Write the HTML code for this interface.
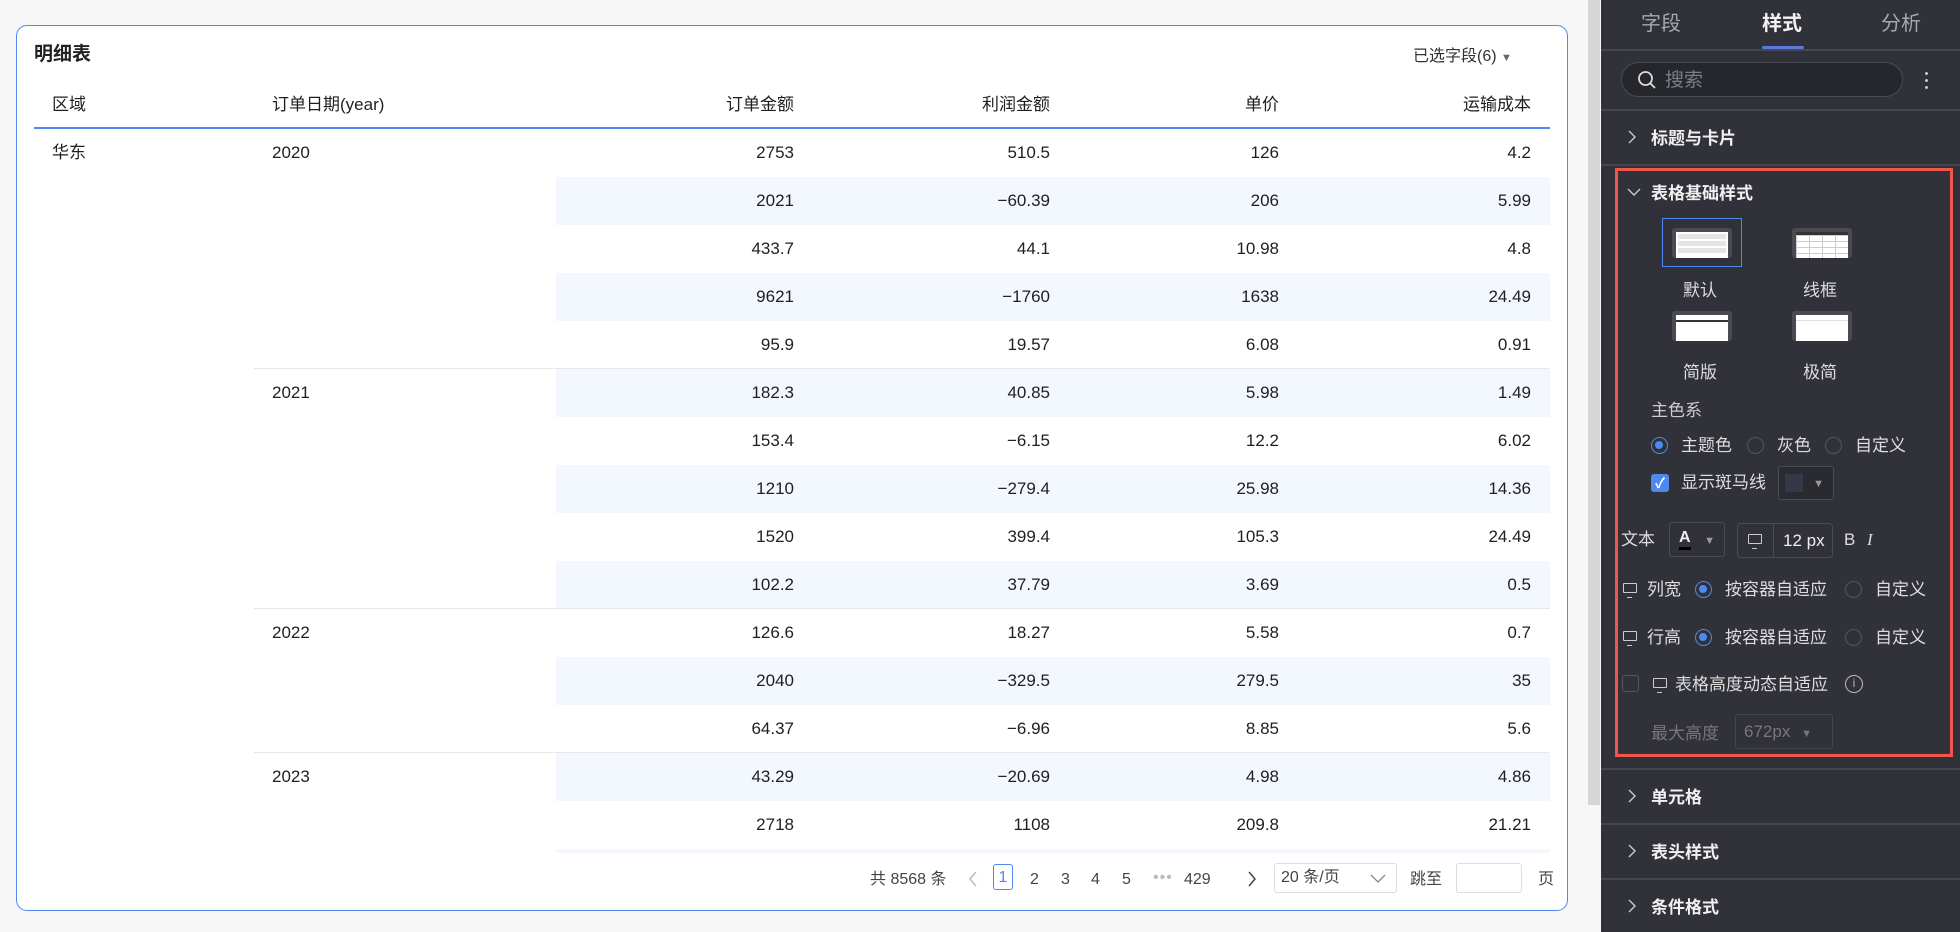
<!DOCTYPE html>
<html><head><meta charset="utf-8"><style>
*{margin:0;padding:0;box-sizing:border-box}
body{width:1960px;height:932px;background:#f7f7f7;font-family:"Liberation Sans","Noto Sans CJK SC",sans-serif;position:relative;overflow:hidden;color:#1f1f1f;line-height:20px}
.a{position:absolute;white-space:nowrap}
.card{position:absolute;left:16px;top:25px;width:1552px;height:886px;background:#fff;border:1.5px solid #4d8af0;border-radius:11px}
.sb{position:absolute;left:1588px;top:0;width:12px;height:805px;background:#d6d6d6}
.tw{position:absolute;left:34px;top:128px;width:1516px;height:725px;overflow:hidden}
.hl{position:absolute;left:34px;top:127px;width:1516px;height:2px;background:#4d8af0}
.r{position:absolute;left:0;width:1516px;height:48px;font-size:17px;line-height:48px}
.z{background:#f3f7fe;left:522px;width:994px}
.r span{position:absolute;top:0}
.c3{right:756px}.c4{right:500px}.c5{right:271px}.c6{right:19px}
.sep{position:absolute;height:1px;background:#e8e8e8;left:220px;width:1296px}
.panel{position:absolute;left:1601px;top:0;width:359px;height:932px;background:#303139;color:#e8e8ea}
.dv{position:absolute;left:0;width:359px;height:1.5px;background:#45464e}
.st{font-size:17px;font-weight:bold;color:#f0f0f0}
.rad{position:absolute;width:17px;height:17px;border-radius:50%;border:1.5px solid #555760}
.rad.on{border:1.5px solid #4d8af0}
.rad.on::after{content:"";position:absolute;left:3px;top:3px;width:8px;height:8px;border-radius:50%;background:#4d8af0}
.mon{position:absolute;width:14px;height:10px;border:1.5px solid #ccc;border-radius:1px}
.mon::after{content:"";position:absolute;left:3px;top:10px;width:5px;height:3px;border-bottom:1.5px solid #ccc}
.pg{font-size:16px;color:#444}
.chev{position:absolute;left:27px}
</style></head><body>
<div class="sb"></div>
<div class="card"></div>
<div class="a" style="left:34px;top:45px;font-size:19px;font-weight:bold;color:#222">明细表</div>
<div class="a" style="left:1413px;top:47px;font-size:16px;color:#333">已选字段(6) <span style="font-size:11px;color:#666">▼</span></div>
<div class="a" style="left:52px;top:95px;font-size:17px">区域</div>
<div class="a" style="left:272px;top:95px;font-size:17px">订单日期(year)</div>
<div class="a" style="left:726px;top:95px;font-size:17px">订单金额</div>
<div class="a" style="left:982px;top:95px;font-size:17px">利润金额</div>
<div class="a" style="left:1245px;top:95px;font-size:17px">单价</div>
<div class="a" style="left:1463px;top:95px;font-size:17px">运输成本</div>
<div class="hl"></div>
<div class="tw">
<div class="r z" style="top:49px"></div><div class="r z" style="top:145px"></div><div class="r z" style="top:241px"></div><div class="r z" style="top:337px"></div><div class="r z" style="top:433px"></div><div class="r z" style="top:529px"></div><div class="r z" style="top:625px"></div><div class="r z" style="top:721px"></div>
<div class="sep" style="top:240px"></div><div class="sep" style="top:480px"></div><div class="sep" style="top:624px"></div>
<div class="r" style="top:1px"><span style="left:18px">华东</span><span style="left:238px">2020</span><span class="c3">2753</span><span class="c4">510.5</span><span class="c5">126</span><span class="c6">4.2</span></div>
<div class="r" style="top:49px"><span class="c3">2021</span><span class="c4">−60.39</span><span class="c5">206</span><span class="c6">5.99</span></div>
<div class="r" style="top:97px"><span class="c3">433.7</span><span class="c4">44.1</span><span class="c5">10.98</span><span class="c6">4.8</span></div>
<div class="r" style="top:145px"><span class="c3">9621</span><span class="c4">−1760</span><span class="c5">1638</span><span class="c6">24.49</span></div>
<div class="r" style="top:193px"><span class="c3">95.9</span><span class="c4">19.57</span><span class="c5">6.08</span><span class="c6">0.91</span></div>
<div class="r" style="top:241px"><span style="left:238px">2021</span><span class="c3">182.3</span><span class="c4">40.85</span><span class="c5">5.98</span><span class="c6">1.49</span></div>
<div class="r" style="top:289px"><span class="c3">153.4</span><span class="c4">−6.15</span><span class="c5">12.2</span><span class="c6">6.02</span></div>
<div class="r" style="top:337px"><span class="c3">1210</span><span class="c4">−279.4</span><span class="c5">25.98</span><span class="c6">14.36</span></div>
<div class="r" style="top:385px"><span class="c3">1520</span><span class="c4">399.4</span><span class="c5">105.3</span><span class="c6">24.49</span></div>
<div class="r" style="top:433px"><span class="c3">102.2</span><span class="c4">37.79</span><span class="c5">3.69</span><span class="c6">0.5</span></div>
<div class="r" style="top:481px"><span style="left:238px">2022</span><span class="c3">126.6</span><span class="c4">18.27</span><span class="c5">5.58</span><span class="c6">0.7</span></div>
<div class="r" style="top:529px"><span class="c3">2040</span><span class="c4">−329.5</span><span class="c5">279.5</span><span class="c6">35</span></div>
<div class="r" style="top:577px"><span class="c3">64.37</span><span class="c4">−6.96</span><span class="c5">8.85</span><span class="c6">5.6</span></div>
<div class="r" style="top:625px"><span style="left:238px">2023</span><span class="c3">43.29</span><span class="c4">−20.69</span><span class="c5">4.98</span><span class="c6">4.86</span></div>
<div class="r" style="top:673px"><span class="c3">2718</span><span class="c4">1108</span><span class="c5">209.8</span><span class="c6">21.21</span></div>
</div>
<!-- pagination -->
<div class="a pg" style="left:870px;top:870px">共 8568 条</div>
<svg class="a" style="left:968px;top:871px" width="10" height="16"><path d="M8 1L2 8l6 7" fill="none" stroke="#bbb" stroke-width="1.5"/></svg>
<div class="a" style="left:993px;top:864px;width:20px;height:26px;border:1.5px solid #4d8af0;border-radius:3px;color:#4d8af0;font-size:16px;text-align:center;line-height:25px">1</div>
<div class="a pg" style="left:1030px;top:870px">2</div>
<div class="a pg" style="left:1061px;top:870px">3</div>
<div class="a pg" style="left:1091px;top:870px">4</div>
<div class="a pg" style="left:1122px;top:870px">5</div>
<div class="a pg" style="left:1153px;top:868px;color:#bbb;letter-spacing:1px">•••</div>
<div class="a pg" style="left:1184px;top:870px">429</div>
<svg class="a" style="left:1247px;top:871px" width="10" height="16"><path d="M2 1l6 7-6 7" fill="none" stroke="#444" stroke-width="1.5"/></svg>
<div class="a" style="left:1274px;top:863px;width:123px;height:30px;border:1px solid #ddd;border-radius:3px;font-size:16px;color:#444;padding-left:6px;line-height:28px">20 条/页 <svg style="position:absolute;right:10px;top:10px" width="16" height="9"><path d="M1 1l7 7 7-7" fill="none" stroke="#888" stroke-width="1.3"/></svg></div>
<div class="a pg" style="left:1410px;top:870px">跳至</div>
<div class="a" style="left:1456px;top:863px;width:66px;height:30px;border:1px solid #ddd;border-radius:3px"></div>
<div class="a pg" style="left:1538px;top:870px">页</div>

<!-- panel -->
<div class="panel">
<div class="a" style="left:40px;top:14px;font-size:20px;color:#a8a9ae">字段</div>
<div class="a" style="left:161px;top:14px;font-size:20px;font-weight:bold;color:#f2f2f2">样式</div>
<div class="a" style="left:280px;top:14px;font-size:20px;color:#a8a9ae">分析</div>
<div class="a" style="left:161px;top:46px;width:42px;height:3px;background:#5b7ae0;border-radius:2px"></div>
<div class="dv" style="top:49px"></div>
<div class="a" style="left:20px;top:62px;width:282px;height:35px;border:1.5px solid #4a4b53;border-radius:18px;background:#26272d"></div>
<svg class="a" style="left:36px;top:70px" width="20" height="20" viewBox="0 0 20 20"><circle cx="8.5" cy="8.5" r="6.5" fill="none" stroke="#ddd" stroke-width="1.8"/><path d="M13 13l5 5" stroke="#ddd" stroke-width="1.8"/></svg>
<div class="a" style="left:64px;top:71px;font-size:19px;color:#7d7e84">搜索</div>
<div class="a" style="left:324px;top:70px;width:3px;height:20px;background:radial-gradient(circle,#ccc 1.3px,transparent 1.6px) 0 0/3px 7px"></div>
<div class="dv" style="top:109px"></div>
<svg class="chev" style="top:130px" width="8" height="14"><path d="M1 1l6 6-6 6" fill="none" stroke="#ccc" stroke-width="1.4"/></svg>
<div class="a st" style="left:50px;top:129px">标题与卡片</div>
<div class="dv" style="top:164px"></div>
<div class="a" style="left:14px;top:168px;width:338px;height:589px;border:3px solid #f0564a"></div>
<svg class="a" style="left:26px;top:188px" width="14" height="9"><path d="M1 1l6 6 6-6" fill="none" stroke="#ccc" stroke-width="1.4"/></svg>
<div class="a st" style="left:50px;top:184px">表格基础样式</div>
<div class="a" style="left:61px;top:218px;width:80px;height:49px;border:1.5px solid #4d8af0"></div>
<div class="a" style="left:71px;top:228px;width:60px;height:30px;background:#4a4b52;border-radius:3px;padding:4px 4px 0"><div style="background:#fff;height:26px;padding:2px"><div style="background:#e4e4e4;height:5px;margin-bottom:2px"></div><div style="background:#e4e4e4;height:5px;margin-bottom:2px"></div><div style="background:#e4e4e4;height:5px"></div></div></div>
<div class="a" style="left:191px;top:228px;width:60px;height:30px;background:#4a4b52;border-radius:3px;padding:4px 4px 0"><div style="background:#fff;height:26px;border-top:3px solid #333;background-image:linear-gradient(#ccc 1px,transparent 1px),linear-gradient(90deg,#ccc 1px,transparent 1px);background-size:13px 6px"></div></div>
<div class="a" style="left:82px;top:281px;font-size:17px;color:#ddd">默认</div>
<div class="a" style="left:202px;top:281px;font-size:17px;color:#ddd">线框</div>
<div class="a" style="left:71px;top:311px;width:60px;height:30px;background:#4a4b52;border-radius:3px;padding:4px 4px 0"><div style="background:#fff;height:26px;border-top:5px solid #fff;box-shadow:inset 0 2px 0 #333"></div></div>
<div class="a" style="left:191px;top:311px;width:60px;height:30px;background:#4a4b52;border-radius:3px;padding:4px 4px 0"><div style="background:#fff;height:26px;box-shadow:inset 0 -20px 0 #fff,inset 0 -21px 0 #e0e0e0"></div></div>
<div class="a" style="left:82px;top:363px;font-size:17px;color:#ddd">简版</div>
<div class="a" style="left:202px;top:363px;font-size:17px;color:#ddd">极简</div>
<div class="a" style="left:50px;top:401px;font-size:17px;color:#ccc">主色系</div>
<div class="rad on" style="left:50px;top:437px"></div>
<div class="a" style="left:80px;top:436px;font-size:17px;color:#ddd">主题色</div>
<div class="rad" style="left:146px;top:437px"></div>
<div class="a" style="left:176px;top:436px;font-size:17px;color:#ddd">灰色</div>
<div class="rad" style="left:224px;top:437px"></div>
<div class="a" style="left:254px;top:436px;font-size:17px;color:#ddd">自定义</div>
<div class="a" style="left:50px;top:474px;width:18px;height:18px;background:#4d8af0;border-radius:3px;color:#fff;font-size:14px;text-align:center;line-height:18px;font-weight:bold">✓</div>
<div class="a" style="left:80px;top:473px;font-size:17px;color:#ddd">显示斑马线</div>
<div class="a" style="left:177px;top:466px;width:56px;height:34px;border:1px solid #4a4b53;border-radius:3px;background:#2a2b31"><div style="position:absolute;left:6px;top:7px;width:18px;height:18px;background:#353848"></div><span style="position:absolute;right:9px;top:7px;font-size:11px;color:#999">▼</span></div>
<div class="a" style="left:20px;top:530px;font-size:17px;color:#ddd">文本</div>
<div class="a" style="left:68px;top:522px;width:56px;height:35px;border:1px solid #4a4b53;border-radius:3px"><span style="position:absolute;left:9px;top:6px;font-size:16px;font-weight:bold;color:#eee;border-bottom:3px solid #000;line-height:18px">A</span><span style="position:absolute;right:9px;top:8px;font-size:11px;color:#999">▼</span></div>
<div class="a" style="left:136px;top:523px;width:96px;height:35px;border:1px solid #4a4b53;border-radius:4px"><div style="position:absolute;left:35px;top:0;width:1px;height:33px;background:#4a4b53"></div><span style="position:absolute;left:45px;top:7px;font-size:17px;color:#eee">12 px</span></div>
<div class="mon" style="left:147px;top:534px"></div>
<div class="a" style="left:243px;top:530px;font-size:17px;color:#ddd">B</div>
<div class="a" style="left:266px;top:530px;font-size:17px;color:#ddd;font-style:italic;font-family:'Liberation Serif',serif">I</div>
<div class="mon" style="left:22px;top:583px"></div>
<div class="a" style="left:46px;top:580px;font-size:17px;color:#ddd">列宽</div>
<div class="rad on" style="left:94px;top:581px"></div>
<div class="a" style="left:124px;top:580px;font-size:17px;color:#ddd">按容器自适应</div>
<div class="rad" style="left:244px;top:581px"></div>
<div class="a" style="left:274px;top:580px;font-size:17px;color:#ddd">自定义</div>
<div class="mon" style="left:22px;top:631px"></div>
<div class="a" style="left:46px;top:628px;font-size:17px;color:#ddd">行高</div>
<div class="rad on" style="left:94px;top:629px"></div>
<div class="a" style="left:124px;top:628px;font-size:17px;color:#ddd">按容器自适应</div>
<div class="rad" style="left:244px;top:629px"></div>
<div class="a" style="left:274px;top:628px;font-size:17px;color:#ddd">自定义</div>
<div class="a" style="left:21px;top:675px;width:17px;height:17px;border:1.5px solid #555760;border-radius:3px"></div>
<div class="mon" style="left:52px;top:678px"></div>
<div class="a" style="left:74px;top:675px;font-size:17px;color:#ddd">表格高度动态自适应</div>
<div class="a" style="left:244px;top:675px;width:18px;height:18px;border:1.5px solid #bbb;border-radius:50%;font-size:12px;color:#bbb;text-align:center;line-height:15px">i</div>
<div class="a" style="left:50px;top:724px;font-size:17px;color:#777">最大高度</div>
<div class="a" style="left:134px;top:714px;width:98px;height:35px;border:1px solid #44454c;border-radius:3px;font-size:17px;color:#777;padding:7px 0 0 8px">672px<span style="position:absolute;right:20px;top:9px;font-size:11px">▼</span></div>
<div class="dv" style="top:768px"></div>
<svg class="chev" style="top:789px" width="8" height="14"><path d="M1 1l6 6-6 6" fill="none" stroke="#ccc" stroke-width="1.4"/></svg>
<div class="a st" style="left:50px;top:788px">单元格</div>
<div class="dv" style="top:823px"></div>
<svg class="chev" style="top:844px" width="8" height="14"><path d="M1 1l6 6-6 6" fill="none" stroke="#ccc" stroke-width="1.4"/></svg>
<div class="a st" style="left:50px;top:843px">表头样式</div>
<div class="dv" style="top:878px"></div>
<svg class="chev" style="top:899px" width="8" height="14"><path d="M1 1l6 6-6 6" fill="none" stroke="#ccc" stroke-width="1.4"/></svg>
<div class="a st" style="left:50px;top:898px">条件格式</div>
</div>
</body></html>
